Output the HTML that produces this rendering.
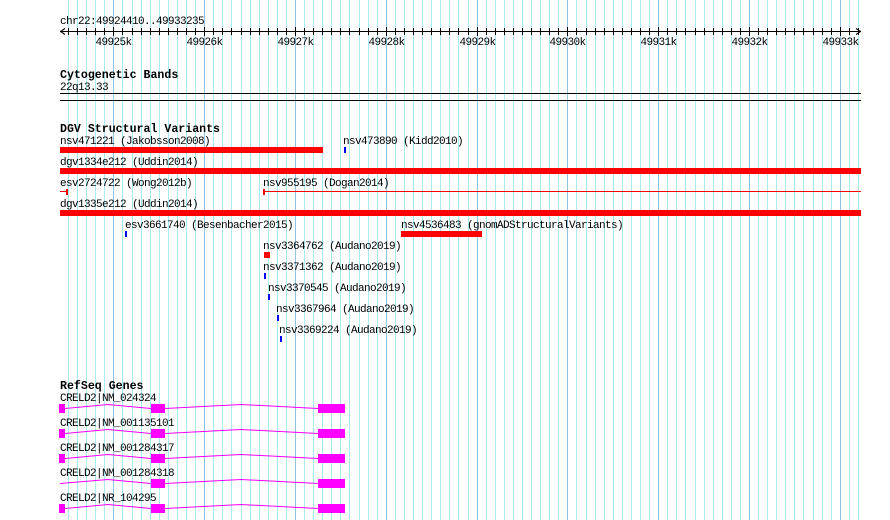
<!DOCTYPE html>
<html><head><meta charset="utf-8"><style>
html,body{margin:0;padding:0;background:#fff;width:890px;height:520px;overflow:hidden}
svg{display:block}
text{font-family:"Liberation Mono",monospace;font-size:11px;letter-spacing:-0.6px;fill:#000}
.b{font-weight:bold;font-size:11.6px;letter-spacing:0}
</style></head><body>
<svg id="s" width="890" height="520" xmlns="http://www.w3.org/2000/svg">
<g id="grid"></g>
<g id="ruler" stroke="#000" stroke-width="1" shape-rendering="crispEdges">
<line x1="60" y1="31.5" x2="861" y2="31.5"/>
<polyline points="65,28.5 60.5,31.5 65,34.5" fill="none"/>
<polyline points="856,28.5 860.5,31.5 856,34.5" fill="none"/>
</g>
<text x="60" y="24">chr22:49924410..49933235</text>
<g id="rlab"></g>
<text class="b" x="60" y="78">Cytogenetic Bands</text>
<text x="60" y="90">22q13.33</text>
<rect x="60" y="93" width="801" height="1" fill="#000"/>
<rect x="60" y="100" width="801" height="1" fill="#000"/>
<text class="b" x="60" y="132">DGV Structural Variants</text>
<text x="60" y="144">nsv471221 (Jakobsson2008)</text>
<rect x="60" y="147" width="263" height="6" fill="#f00"/>
<text x="343" y="144">nsv473890 (Kidd2010)</text>
<rect x="344" y="147" width="2" height="6" fill="#00f"/>
<text x="60" y="165">dgv1334e212 (Uddin2014)</text>
<rect x="60" y="168" width="801" height="6" fill="#f00"/>
<text x="60" y="186">esv2724722 (Wong2012b)</text>
<rect x="66" y="189" width="2" height="6" fill="#f00"/>
<rect x="60" y="191" width="8" height="1" fill="#f00"/>
<text x="263" y="186">nsv955195 (Dogan2014)</text>
<rect x="263" y="189" width="2" height="6" fill="#f00"/>
<rect x="263" y="191" width="598" height="1" fill="#f00"/>
<text x="60" y="207">dgv1335e212 (Uddin2014)</text>
<rect x="60" y="210" width="801" height="6" fill="#f00"/>
<text x="125" y="228">esv3661740 (Besenbacher2015)</text>
<rect x="125" y="231" width="2" height="6" fill="#00f"/>
<text x="401" y="228">nsv4536483 (gnomADStructuralVariants)</text>
<rect x="401" y="231" width="81" height="6" fill="#f00"/>
<text x="263" y="249">nsv3364762 (Audano2019)</text>
<rect x="264" y="252" width="6" height="6" fill="#f00"/>
<text x="263" y="270">nsv3371362 (Audano2019)</text>
<rect x="264" y="273" width="2" height="6" fill="#00f"/>
<text x="268" y="291">nsv3370545 (Audano2019)</text>
<rect x="268" y="294" width="2" height="6" fill="#00f"/>
<text x="276" y="312">nsv3367964 (Audano2019)</text>
<rect x="277" y="315" width="2" height="6" fill="#00f"/>
<text x="279" y="333">nsv3369224 (Audano2019)</text>
<rect x="280" y="336" width="2" height="6" fill="#00f"/>
<text class="b" x="60" y="389">RefSeq Genes</text>
<g id="genes"></g>
</svg>
<script>
var NS="http://www.w3.org/2000/svg";
function el(p,n,a){var e=document.createElementNS(NS,n);for(var k in a)e.setAttribute(k,a[k]);p.appendChild(e);return e;}
var g=document.getElementById('grid'),r=document.getElementById('ruler'),rl=document.getElementById('rlab');
for(var i=0;;i++){var x=Math.round(68+i*9.08)+0.5;if(x>861)break;var maj=(i%10==5);
el(g,'line',{x1:x,y1:0,x2:x,y2:520,stroke:maj?'#8cc4e4':'#a8eaf2','stroke-width':1,'shape-rendering':'crispEdges'});
el(r,'line',{x1:x,y1:maj?27:28,x2:x,y2:maj?36:35});
if(maj){var k=49925+(i-5)/10;var t=el(rl,'text',{x:x,y:45,'text-anchor':'middle'});t.textContent=k+'k';}}
var gs=document.getElementById('genes');
var names=['CRELD2|NM_024324','CRELD2|NM_001135101','CRELD2|NM_001284317','CRELD2|NM_001284318','CRELD2|NR_104295'];
for(var j=0;j<5;j++){var y=392+j*25;var t=el(gs,'text',{x:60,y:y+9});t.textContent=names[j];
var by=y+12,m=by+4.5;
if(j!=3)el(gs,'rect',{x:59,y:by,width:6,height:9,fill:'#f0f'});
el(gs,'polyline',{points:(j==3?'60':'65')+','+m+' 108,'+(m-4)+' 151,'+m,fill:'none',stroke:'#f0f','stroke-width':1});
el(gs,'rect',{x:151,y:by,width:14,height:9,fill:'#f0f'});
el(gs,'polyline',{points:'165,'+m+' 241,'+(m-4)+' 318,'+m,fill:'none',stroke:'#f0f','stroke-width':1});
el(gs,'rect',{x:318,y:by,width:27,height:9,fill:'#f0f'});}
</script>
</body></html>
